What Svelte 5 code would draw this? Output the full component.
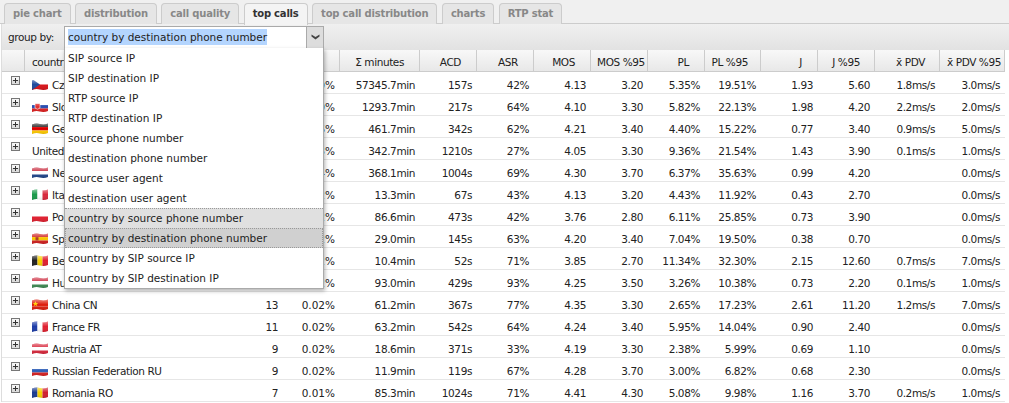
<script>
const tabs = [
  { t: 'pie chart' }, { t: 'distribution' }, { t: 'call quality' }, { t: 'top calls', on: true },
  { t: 'top call distribution' }, { t: 'charts' }, { t: 'RTP stat' }
];
const options = ['SIP source IP', 'SIP destination IP', 'RTP source IP', 'RTP destination IP', 'source phone number', 'destination phone number', 'source user agent', 'destination user agent', 'country by source phone number', 'country by destination phone number', 'country by SIP source IP', 'country by SIP destination IP'];
const heads = [
  ['Σ minutes', 'p15'], ['ACD', 'p15'], ['ASR', 'p15'], ['MOS', 'p15'], ['MOS %95', 'p3'], ['PL', 'p15'],
  ['PL %95', 'p12'], ['J', 'p15'], ['J %95', 'p14'], ['x̄ PDV', 'p14'], ['x̄ PDV %95', 'p3']
];
const h = (a, b, c) => ({ type: 'h', a, b, c });
const v = (a, b, c) => ({ type: 'v', a, b, c });
const F = {
  CZ: h('#fff', '#d7141a', null), SK: h('#fff', '#2a4fb0', '#e02020'), DE: h('#222', '#d00', '#fc0'),
  NL: h('#c8283c', '#fff', '#21468b'), IT: v('#1a9a4a', '#fff', '#d8283c'), PL: h('#fff', '#e02030', null),
  ES: h('#d02020', '#f7c400', '#d02020'), BE: v('#222', '#f7d000', '#e02030'), HU: h('#cd2a3e', '#fff', '#3f8a54'),
  CN: h('#de2010', '#de2010', '#de2010'), FR: v('#1c3ca8', '#fff', '#e02030'), AT: h('#d8283c', '#fff', '#d8283c'),
  RU: h('#fff', '#3060b8', '#d82020'), RO: v('#1c3c90', '#f7d000', '#d02030')
};
const rows = [
  ['Czech Republic CZ', 'CZ', '12301', '24.10%', '57345.7min', '157s', '42%', '4.13', '3.20', '5.35%', '19.51%', '1.93', '5.60', '1.8ms/s', '3.0ms/s'],
  ['Slovakia SK', 'SK', '358', '0.70%', '1293.7min', '217s', '64%', '4.10', '3.30', '5.82%', '22.13%', '1.98', '4.20', '2.2ms/s', '2.0ms/s'],
  ['Germany DE', 'DE', '81', '0.16%', '461.7min', '342s', '62%', '4.21', '3.40', '4.40%', '15.22%', '0.77', '3.40', '0.9ms/s', '5.0ms/s'],
  ['United States US', null, '17', '0.03%', '342.7min', '1210s', '27%', '4.05', '3.30', '9.36%', '21.54%', '1.43', '3.90', '0.1ms/s', '1.0ms/s'],
  ['Netherlands NL', 'NL', '22', '0.04%', '368.1min', '1004s', '69%', '4.30', '3.70', '6.37%', '35.63%', '0.99', '4.20', '', '0.0ms/s'],
  ['Italy IT', 'IT', '12', '0.02%', '13.3min', '67s', '43%', '4.13', '3.20', '4.43%', '11.92%', '0.43', '2.70', '', '0.0ms/s'],
  ['Poland PL', 'PL', '11', '0.02%', '86.6min', '473s', '42%', '3.76', '2.80', '6.11%', '25.85%', '0.73', '3.90', '', '0.0ms/s'],
  ['Spain ES', 'ES', '12', '0.02%', '29.0min', '145s', '63%', '4.20', '3.40', '7.04%', '19.50%', '0.38', '0.70', '', '0.0ms/s'],
  ['Belgium BE', 'BE', '12', '0.02%', '10.4min', '52s', '71%', '3.85', '2.70', '11.34%', '32.30%', '2.15', '12.60', '0.7ms/s', '7.0ms/s'],
  ['Hungary HU', 'HU', '13', '0.02%', '93.0min', '429s', '93%', '4.25', '3.50', '3.26%', '10.38%', '0.73', '2.20', '0.1ms/s', '1.0ms/s'],
  ['China CN', 'CN', '13', '0.02%', '61.2min', '367s', '77%', '4.35', '3.30', '2.65%', '17.23%', '2.61', '11.20', '1.2ms/s', '7.0ms/s'],
  ['France FR', 'FR', '11', '0.02%', '63.2min', '542s', '64%', '4.24', '3.40', '5.95%', '14.04%', '0.90', '2.40', '', '0.0ms/s'],
  ['Austria AT', 'AT', '9', '0.02%', '18.6min', '371s', '33%', '4.19', '3.30', '2.38%', '5.99%', '0.69', '1.10', '', '0.0ms/s'],
  ['Russian Federation RU', 'RU', '9', '0.02%', '11.9min', '119s', '67%', '4.28', '3.70', '3.00%', '6.82%', '0.68', '2.30', '', '0.0ms/s'],
  ['Romania RO', 'RO', '7', '0.01%', '85.3min', '1024s', '71%', '4.41', '4.30', '5.08%', '9.98%', '1.16', '3.70', '0.2ms/s', '1.0ms/s']
];
const cols = ['c0', 'c1', 'c2', 'c3', 'c4', 'c5', 'c5', 'c5', 'c5', 'c5', 'c6', 'c5', 'c5', 'c7', 'c7'];
</script>

<svg class="defs" width="0" height="0" aria-hidden="true">
  <defs>
    <linearGradient id="gloss" x1="0" y1="0" x2="0" y2="1">
      <stop offset="0" stop-color="#fff" stop-opacity=".5" />
      <stop offset=".5" stop-color="#fff" stop-opacity="0" />
      <stop offset="1" stop-color="#000" stop-opacity=".12" />
    </linearGradient>
    <clipPath id="wave"><path d="M0 1.5Q4 0 8 1T16 .5V10Q12 11.5 8 10.5T0 11Z" /></clipPath>
  </defs>
</svg>

{#snippet flag(code)}
  {@const f = F[code]}
  <svg class="flag" width="16" height="11" viewBox="0 0 16 11">
    <g clip-path="url(#wave)">
      {#if f.type === 'h' && f.c}
        <rect width="16" height="4" fill={f.a} /><rect y="4" width="16" height="3.5" fill={f.b} /><rect y="7.5" width="16" height="3.5" fill={f.c} />
      {:else if f.type === 'h'}
        <rect width="16" height="5.5" fill={f.a} /><rect y="5.5" width="16" height="5.5" fill={f.b} />
      {:else}
        <rect width="5.5" height="11" fill={f.a} /><rect x="5.5" width="5" height="11" fill={f.b} /><rect x="10.5" width="5.5" height="11" fill={f.c} />
      {/if}
      {#if code === 'CZ'}<path d="M0 0L8 5.5L0 11Z" fill="#1f4a9c" />{/if}
      {#if code === 'SK'}<path d="M3 2.5H8V7Q5.5 9.5 3 7Z" fill="#e03030" stroke="#fff" stroke-width=".6" />{/if}
      {#if code === 'ES'}<rect x="3.5" y="4" width="3" height="3.5" fill="#b04020" />{/if}
      {#if code === 'CN'}<path d="M3.5 2l.8 2 2 .1-1.6 1.2.6 2-1.8-1.2-1.8 1.2.6-2L.7 4.1l2-.1Z" fill="#fc0" />{/if}
      <rect width="16" height="11" fill="url(#gloss)" />
    </g>
  </svg>
{/snippet}

<div class="page">
  <nav class="tabs">
    {#each tabs as tab}
      <span class="tab" class:on={tab.on}>{tab.t}</span>
    {/each}
  </nav>
  <div class="panel">
    <div class="toolbar">
      <span class="lbl">group by:</span>
      <div class="combo">
        <div class="field">
          <span class="sel">country by destination phone number</span>
          <span class="arrow">
            <svg width="9" height="6" viewBox="0 0 9 6"><path d="M0.5 0.5L4.5 3L8.5 0.5V2.5L4.5 5.5L0.5 2.5Z" fill="#444" /></svg>
          </span>
        </div>
        <ul class="list">
          {#each options as o, i}
            <li class:hov={i === 8} class:cur={i === 9}>{o}</li>
          {/each}
        </ul>
      </div>
    </div>
    <table>
      <colgroup>
        {#each cols as c}<col class={c} />{/each}
      </colgroup>
      <thead>
        <tr>
          <th></th>
          <th class="name">country</th>
          <th></th>
          <th></th>
          {#each heads as [label, pad]}
            <th class={pad}>{label}</th>
          {/each}
        </tr>
      </thead>
      <tbody>
        {#each rows as r}
          <tr>
            <td class="exp">
              <svg width="9" height="9" viewBox="0 0 9 9">
                <rect x=".5" y=".5" width="8" height="8" fill="#ddd" stroke="#777" />
                <rect x="1" y="1" width="7" height="3" fill="#f4f4f4" />
                <path d="M2 4.5H7M4.5 2V7" stroke="#333" />
              </svg>
            </td>
            <td class="name">
              <span class="cell">
                {#if r[1]}{@render flag(r[1])}{/if}
                <span>{r[0]}</span>
              </span>
            </td>
            {#each r.slice(2) as cell}
              <td>{cell}</td>
            {/each}
          </tr>
        {/each}
      </tbody>
    </table>
  </div>
</div>

<style>
  :global(body) { margin: 0; background: #fff; }
  .defs { position: absolute; }
  .page {
    width: 1009px;
    height: 403px;
    overflow: hidden;
    font: 10.5px/14px "DejaVu Sans", sans-serif;
    color: #222;
  }
  .tabs {
    display: flex;
    gap: 4.5px;
    height: 24px;
    box-sizing: border-box;
    padding: 3px 0 0 4px;
    background: #f0f0f0;
    border-bottom: 1px solid #ccc;
  }
  .tab {
    box-sizing: border-box;
    height: 21px;
    padding: 3px 8px 0;
    border: 1px solid #ccc;
    border-bottom: 0;
    border-radius: 4px 4px 0 0;
    background: #e6e6e6;
    font-size: 10px;
    font-weight: bold;
    letter-spacing: -.2px;
    color: #888;
    white-space: nowrap;
  }
  .tab.on { background: #f4f4f4; color: #333; height: 22px; }
  .panel { margin-left: 1px; border-left: 1px solid #ddd; }
  .toolbar {
    display: flex;
    align-items: center;
    height: 26px;
    padding-left: 6px;
    background: linear-gradient(#f0f0f0, #e2e2e2);
  }
  .lbl { width: 56px; letter-spacing: -.4px; }
  .combo { position: relative; z-index: 2; }
  .field {
    box-sizing: border-box;
    width: 260px;
    height: 23px;
    display: flex;
    align-items: center;
    justify-content: space-between;
    background: #fff;
    border: 1px solid #aaa;
    padding-left: 3px;
  }
  .sel { background: #b4d5fe; white-space: nowrap; line-height: 16px; }
  .arrow {
    box-sizing: border-box;
    width: 17px;
    height: 21px;
    display: flex;
    align-items: center;
    justify-content: center;
    background: #ddd;
    border-left: 1px solid #aaa;
  }
  .list {
    position: absolute;
    left: 0;
    top: 22px;
    box-sizing: border-box;
    width: 260px;
    margin: 0;
    padding: 0;
    list-style: none;
    background: #fff;
    border: 1px solid #aaa;
    border-top: 0;
    box-shadow: 1px 2px 4px rgba(0, 0, 0, .3);
  }
  .list li {
    box-sizing: border-box;
    height: 20px;
    padding: 3px 3px 0;
    white-space: nowrap;
    line-height: 14px;
  }
  .list li.hov { background: #e0e0e0; border-top: 1px dotted #999; padding-top: 2px; }
  .list li.cur { background: #d0d0d0; border: 1px dotted #999; padding: 2px 2px 0; }
  table {
    table-layout: fixed;
    width: 1003px;
    border-collapse: separate;
    border-spacing: 0;
    letter-spacing: -.4px;
  }
  .c0 { width: 23px; }
  .c1 { width: 200px; }
  .c2 { width: 58px; }
  .c3 { width: 57px; }
  .c4 { width: 80px; }
  .c5 { width: 57px; }
  .c6 { width: 56px; }
  .c7 { width: 65px; }
  th {
    box-sizing: border-box;
    height: 22px;
    padding: 2px 15px 0 6px;
    font-weight: normal;
    text-align: right;
    white-space: nowrap;
    background: linear-gradient(#f8f8f8, #e8e8e8);
    border-right: 1px solid #ccc;
    border-bottom: 1px solid #ccc;
  }
  th.p3 { padding-right: 3px; }
  th.p12 { padding-right: 12px; }
  th.p14 { padding-right: 14px; }
  th.name, td.name { text-align: left; padding-left: 7px; padding-right: 0; }
  td {
    box-sizing: border-box;
    height: 22px;
    padding: 5px 5px 0 0;
    text-align: right;
    white-space: nowrap;
    overflow: hidden;
    border-bottom: 1px solid #e6e6e6;
  }
  td:nth-child(4) { letter-spacing: 0; }
  td.exp { padding: 0 0 4px 9px; text-align: left; }
  .exp svg { display: block; }
  .cell { display: flex; align-items: center; gap: 4px; }
  .flag { flex: none; margin-bottom: 2px; }
</style>
